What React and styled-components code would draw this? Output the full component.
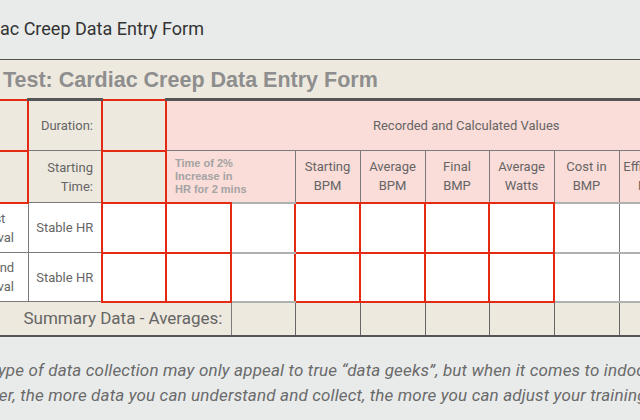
import React from 'react';
import styled, { createGlobalStyle, css } from 'styled-components';

const RED = '#e42a12';
const GRID = '#7a7a7a';
const SOFT = '#b0b0b0';
const BEIGE = '#ede9df';
const PINK = '#fadcd8';
const INK = '#656565';

const GlobalStyle = createGlobalStyle`
  html, body {
    margin: 0;
    padding: 0;
    overflow: hidden;
    background: #e9ebea;
  }
  body {
    width: 640px;
    height: 420px;
    font-family: Roboto, "Noto Sans", sans-serif;
  }
`;

const Page = styled.div`
  width: 813px;
  margin-left: -48px;
`;

const Heading = styled.h2`
  margin: 0;
  height: 59px;
  padding-left: 6px;
  font: 400 18px/57px Roboto, sans-serif;
  color: #333;
`;

const Figure = styled.section`
  border-top: 1px solid #555;
  background: ${BEIGE};
`;

const Title = styled.h3`
  margin: 0;
  height: 38px;
  padding-left: 51px;
  font: bold 21.5px/40px "Liberation Sans", Arial, sans-serif;
  color: #8e8e8e;
`;

const Grid = styled.table`
  width: 813px;
  border-collapse: collapse;
  table-layout: fixed;
  font-size: 13px;
  color: ${INK};
`;

const tones = { beige: BEIGE, pink: PINK, white: '#fff' };

const edges = {
  red: css`border: 2px solid ${RED};`,
  gray: css`border: 1px solid ${GRID};`,
  soft: css`
    border-left: 1px solid ${GRID};
    border-right: 1px solid ${GRID};
    border-top: 2px solid ${SOFT};
    border-bottom: 2px solid ${SOFT};
  `,
  sum: css`
    border-left: 1px solid #666;
    border-right: 1px solid #666;
    border-top: 1px solid #666;
    border-bottom: 2px solid #555;
  `,
};

const Cell = styled.td`
  padding: 0 ${(p) => (p.$pad ?? 8)}px;
  background: ${(p) => tones[p.$tone || 'white']};
  ${(p) => edges[p.$edge || 'gray']}
  ${(p) => p.$cap && css`border-top: 3px solid #555;`}
  text-align: ${(p) => p.$align || 'center'};
  line-height: 19px;
  vertical-align: middle;
  white-space: nowrap;
`;

const Note = styled.div`
  font: bold 11px/13px "Liberation Sans", Arial, sans-serif;
  color: #a4a4a4;
  text-align: left;
`;

const Row = styled.tr`
  height: ${(p) => p.$h}px;
`;

const SummaryLabel = styled(Cell)`
  font-size: 17px;
  border-left: 0;
  border-bottom: 2px solid #555;
`;

const Paragraph = styled.p`
  margin: 21px 0 0;
  font: italic 17px/25px Roboto, sans-serif;
  letter-spacing: 0.15px;
  color: #6a6a6a;
`;

const Line = styled.span`
  display: block;
  white-space: nowrap;
  margin-left: ${(p) => p.$shift}px;
`;

const widths = [75, 74, 64, 65, 64, 65, 65, 64, 65, 65, 64, 83];

const measures = [
  ['Starting', 'BPM'],
  ['Average', 'BPM'],
  ['Final', 'BMP'],
  ['Average', 'Watts'],
  ['Cost in', 'BMP'],
  ['Efficiency', 'Rate'],
];

function Two({ lines }) {
  return (
    <>
      {lines[0]}
      <br />
      {lines[1]}
    </>
  );
}

function DataRow({ h, interval }) {
  return (
    <Row $h={h}>
      <Cell $pad={0} style={{ paddingLeft: 4 }}>
        <Two lines={interval} />
      </Cell>
      <Cell $pad={2}>Stable HR</Cell>
      <Cell $edge="red" />
      <Cell $edge="red" />
      <Cell $edge="soft" />
      <Cell $edge="red" />
      <Cell $edge="red" />
      <Cell $edge="red" />
      <Cell $edge="red" />
      <Cell $edge="soft" />
      <Cell $edge="soft" />
      <Cell $edge="soft" />
    </Row>
  );
}

export default function App() {
  return (
    <>
      <GlobalStyle />
      <Page>
        <Heading>Cardiac Creep Data Entry Form</Heading>
        <Figure>
          <Title>Test: Cardiac Creep Data Entry Form</Title>
          <Grid>
            <colgroup>
              {widths.map((w, i) => (
                <col key={i} style={{ width: w }} />
              ))}
            </colgroup>
            <tbody>
              <Row $h={51}>
                <Cell $tone="beige" $edge="red" />
                <Cell $tone="beige" $align="right" $cap>
                  Duration:
                </Cell>
                <Cell $tone="beige" $edge="red" />
                <Cell $tone="pink" colSpan={9} $cap>
                  Recorded and Calculated Values
                </Cell>
              </Row>
              <Row $h={52}>
                <Cell $tone="beige" $edge="red" />
                <Cell $tone="beige" $align="right">
                  <Two lines={['Starting', 'Time:']} />
                </Cell>
                <Cell $tone="beige" $edge="red" />
                <Cell $tone="pink" colSpan={2}>
                  <Note>
                    Time of 2%
                    <br />
                    Increase in
                    <br />
                    HR for 2 mins
                  </Note>
                </Cell>
                {measures.map((m, i) => (
                  <Cell key={i} $tone="pink" $pad={2}>
                    <Two lines={m} />
                  </Cell>
                ))}
                <Cell $tone="pink" />
              </Row>
              <DataRow h={50} interval={['First', 'Interval']} />
              <DataRow h={49} interval={['Second', 'Interval']} />
              <Row $h={34}>
                <SummaryLabel $tone="beige" $align="right" colSpan={4}>
                  Summary Data - Averages:
                </SummaryLabel>
                {[...Array(8)].map((_, i) => (
                  <Cell key={i} $tone="beige" $edge="sum" />
                ))}
              </Row>
            </tbody>
          </Grid>
        </Figure>
        <Paragraph>
          <Line $shift={4}>
            This type of data collection may only appeal to true “data geeks”, but when it comes to indoor training
          </Line>
          <Line $shift={-4}>
            However, the more data you can understand and collect, the more you can adjust your training
          </Line>
        </Paragraph>
      </Page>
    </>
  );
}
